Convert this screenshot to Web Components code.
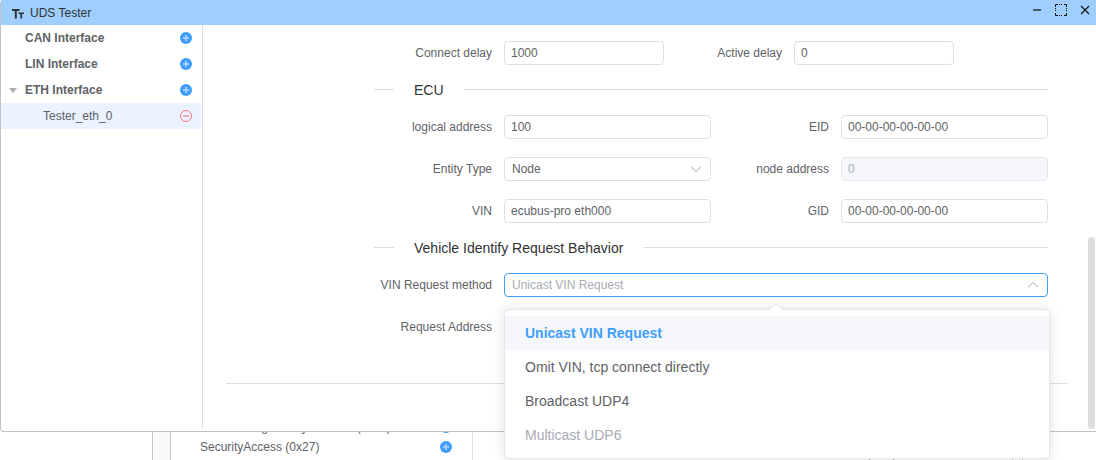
<!DOCTYPE html>
<html lang="en">
<head>
<meta charset="utf-8">
<title>UDS Tester</title>
<style>
html,body{margin:0;height:100%}
body{font:12px/20px "Liberation Sans",Arial,sans-serif;color:#606266;background:#fff;overflow:hidden}
</style>
</head>
<body>
<uds-app></uds-app>
<script>
const define = (name, html, setup) => customElements.define(name, class extends HTMLElement {
  connectedCallback() {
    if (this.shadowRoot) return;
    const t = document.createElement('template');
    t.innerHTML = '<style>*{box-sizing:border-box}</style>' + html;
    this.attachShadow({mode: 'open'}).append(t.content.cloneNode(true));
    if (setup) setup(this, this.shadowRoot);
  }
});

define('circle-button', `
<style>
:host{display:flex}
button{all:unset;display:flex;color:#409eff}
:host([kind=remove]) button{color:#f56c6c}
svg{width:12px;height:12px;display:block}
</style>
<button type="button"></button>`, (el, root) => {
  const b = root.querySelector('button');
  const remove = el.getAttribute('kind') === 'remove';
  b.setAttribute('aria-label', el.getAttribute('label'));
  b.innerHTML = remove
    ? '<svg viewBox="0 0 12 12" fill="none" stroke="currentColor"><circle cx="6" cy="6" r="5.5" stroke-width=".9"/><path d="M3 6h6" stroke-width="1"/></svg>'
    : '<svg viewBox="0 0 12 12"><circle cx="6" cy="6" r="6" fill="currentColor"/><path d="M3 6h6M6 3v6" stroke="#b3d8ff" stroke-width="1.6"/></svg>';
});

define('tree-row', `
<style>
:host{display:flex;align-items:center;height:26px;padding:0 9px 0 24px;position:relative;font-weight:bold}
:host([leaf]){padding-left:42px;font-weight:normal}
:host([active]){background:#eaf3ff}
.name{flex:1}
svg{display:none;position:absolute;left:8px;top:11px}
:host([open]) svg{display:block}
</style>
<svg width="8" height="5" viewBox="0 0 8 5"><path d="M0 0h8L4 5z" fill="#a8abb2"/></svg>
<span class="name"><slot></slot></span><slot name="action"></slot>`);

define('title-bar', `
<style>
:host{display:flex;align-items:center;height:25px;background:#a0cfff;color:#303133;padding:0 5px 0 11px}
h1{font:inherit;margin:0 auto 0 6px;flex:1}
nav{display:flex;gap:12px;padding-bottom:5px}
button{all:unset;display:flex}
svg{display:block}
</style>
<svg width="12" height="12" viewBox="0 0 12 12"><path d="M0 2h7.500v2H4.800v7.500h-2V4H0zM6.500 5.500H12v1.600h-1.900v4.400H8.400V7.100H6.500z" fill="#303133"/></svg>
<h1><slot></slot></h1>
<nav>
<button type="button" aria-label="Minimize"><svg width="12" height="12" viewBox="0 0 12 12"><path d="M2 6h8" stroke="#47586b" stroke-width="2"/></svg></button>
<button type="button" aria-label="Maximize"><svg width="12" height="12" viewBox="0 0 12 12" fill="none" stroke="#111"><path d="M.5 3v-2.500h2.500M9 .5h2.500v2.500M11.500 9v2.500h-2.500M3 11.500h-2.500v-2.500"/><path d="M4 .5h4M4 11.500h4M.5 4v4M11.500 4v4" stroke-dasharray="1 1"/></svg></button>
<button type="button" aria-label="Close"><svg width="12" height="12" viewBox="0 0 12 12"><path d="M2 2l8 8M10 2l-8 8" stroke="#111" stroke-width="1.200"/></svg></button>
</nav>`);

define('section-divider', `
<style>
:host{display:flex;height:14px;font-size:14px;line-height:14px;color:#303133}
:host::before,:host::after{content:"";height:1px;margin-top:6px;background:#dcdfe6;width:20px}
:host::after{flex:1}
h2{font:inherit;margin:0;padding:0 20px;white-space:nowrap}
</style>
<h2><slot></slot></h2>`);

define('form-row', `
<style>
:host{display:flex}
::slotted(*){flex:1}
:host([compact]) ::slotted(*){flex:none;width:290px}
</style><slot></slot>`);

define('form-field', `
<style>
:host{display:flex;align-items:center;height:24px}
label{flex:none;width:130px;padding-right:12px;text-align:right;white-space:nowrap}
.control{flex:1;min-width:0;position:relative;display:flex}
input,select{appearance:none;width:100%;height:24px;margin:0;padding:0 6px;border:1px solid #dcdfe6;border-radius:4px;background:#fff;color:#606266;font:inherit;outline:0}
select{padding:0 7px}
input:disabled{background:#f5f7fa;color:#a8abb2;border-color:#e4e7ed}
:host([open]) select{border-color:#409eff;color:#a8abb2}
svg{position:absolute;right:8px;top:5px;width:14px;height:14px;fill:#a8abb2;pointer-events:none}
:host([open]) svg{transform:rotate(180deg)}
</style>
<label for="c"></label><div class="control"></div>`, (el, root) => {
  root.querySelector('label').textContent = el.getAttribute('label');
  const box = root.querySelector('.control');
  const value = el.getAttribute('value') || '';
  if (el.hasAttribute('select')) {
    box.innerHTML = '<select id="c"><option></option></select><svg viewBox="0 0 1024 1024"><path d="M831.872 340.864 512 652.672 192.128 340.864a30.592 30.592 0 0 0-42.752 0 29.120 29.120 0 0 0 0 41.600L489.664 714.240a32 32 0 0 0 44.672 0l340.288-331.712a29.120 29.120 0 0 0 0-41.728 30.592 30.592 0 0 0-42.752 0z"/></svg><slot></slot>';
    box.querySelector('option').textContent = value;
  } else {
    box.innerHTML = '<input id="c" type="text">';
    const input = box.querySelector('input');
    input.value = value;
    input.disabled = el.hasAttribute('disabled');
  }
});

define('option-popup', `
<style>
:host{position:absolute;z-index:5;left:0;right:-2px;top:36px;padding:6px 0;background:#fff;border:1px solid #e4e7ed;border-radius:4px;box-shadow:0 0 12px rgba(0,0,0,.12);font-size:14px;line-height:34px}
:host::before{content:"";position:absolute;left:50%;top:-5px;width:10px;height:10px;margin-left:-6px;box-sizing:border-box;background:#fff;border:1px solid #e4e7ed;border-right:0;border-bottom:0;border-radius:2px 0 0 0;transform:rotate(45deg)}
ul{list-style:none;margin:0;padding:0;position:relative}
::slotted(li){padding:0 20px;white-space:nowrap}
::slotted(li[aria-selected=true]){background:#f5f7fa;color:#409eff;font-weight:bold}
::slotted(li[aria-disabled=true]){color:#a8abb2}
</style>
<ul role="listbox"><slot></slot></ul>`);

define('tester-window', `
<style>
:host{display:block;background:#fff;border:1px solid #c0c2c6;border-width:0 0 1px 1px;border-radius:4px 0 0 4px;position:relative;z-index:2}
.body{display:flex}
aside{flex:none;width:202px;padding-right:1px;border-right:1px solid #dcdfe6;margin-bottom:2px}
main{flex:1;min-width:0;padding:16px 20px 47px 23px}
form{display:flex;flex-direction:column;gap:18px;padding:0 20px 44px 148px;border-bottom:1px solid #dcdfe6}
.scroll{flex:none;width:7px;margin:0 1px 2px 0;display:flex;flex-direction:column;justify-content:flex-end}
.thumb{height:192px;border-radius:4px;background:#dddee0}
</style>
<title-bar>UDS Tester</title-bar>
<div class="body">
<aside>
<tree-row>CAN Interface<circle-button slot="action" label="Add CAN tester"></circle-button></tree-row>
<tree-row>LIN Interface<circle-button slot="action" label="Add LIN tester"></circle-button></tree-row>
<tree-row open>ETH Interface<circle-button slot="action" label="Add ETH tester"></circle-button></tree-row>
<tree-row leaf active>Tester_eth_0<circle-button slot="action" kind="remove" label="Remove tester"></circle-button></tree-row>
</aside>
<main>
<form>
<form-row compact><form-field label="Connect delay" value="1000"></form-field><form-field label="Active delay" value="0"></form-field></form-row>
<section-divider>ECU</section-divider>
<form-row><form-field label="logical address" value="100"></form-field><form-field label="EID" value="00-00-00-00-00-00"></form-field></form-row>
<form-row><form-field select label="Entity Type" value="Node"></form-field><form-field label="node address" value="0" disabled></form-field></form-row>
<form-row><form-field label="VIN" value="ecubus-pro eth000"></form-field><form-field label="GID" value="00-00-00-00-00-00"></form-field></form-row>
<section-divider>Vehicle Identify Request Behavior</section-divider>
<form-row><form-field select open label="VIN Request method" value="Unicast VIN Request"><option-popup>
<li role="option" aria-selected="true">Unicast VIN Request</li>
<li role="option">Omit VIN, tcp connect directly</li>
<li role="option">Broadcast UDP4</li>
<li role="option" aria-disabled="true">Multicast UDP6</li>
</option-popup></form-field></form-row>
<form-row><form-field label="Request Address"></form-field></form-row>
</form>
</main>
<div class="scroll"><div class="thumb"></div></div>
</div>`);

define('service-row', `
<style>
:host{display:flex;align-items:center;justify-content:space-between;height:20px;white-space:nowrap}
</style><slot></slot><circle-button label="Add service"></circle-button>`);

define('service-panel', `
<style>
:host{display:flex;flex:1;min-height:0;overflow:hidden}
.side{width:153px;border-right:1px solid #c0c2c6}
.gutter{width:18px;background:#fafafa;border-right:1px solid #c0c2c6}
.list{width:302px;padding:0 20px 0 29px;border-right:1px solid #dcdfe6}
.rows{margin-top:-15px}
.rest{flex:1;display:flex;align-items:flex-end;justify-content:flex-end;gap:118px;padding-right:73px}
.cell{height:1px;width:25px;border:1px solid #b4b6ba;border-width:0 1px}
.cell + .cell{width:11px;border-color:#d4d6da}
</style>
<div class="side"></div><div class="gutter"></div>
<div class="list"><div class="rows">
<service-row>ReadScalingDataByIdentifier (0x24)</service-row>
<service-row>SecurityAccess (0x27)</service-row>
</div></div>
<div class="rest"><div class="cell"></div><div class="cell"></div></div>`);

define('uds-app', `
<style>:host{display:flex;flex-direction:column;height:100vh}</style>
<tester-window></tester-window>
<service-panel></service-panel>`);
</script>
</body>
</html>
